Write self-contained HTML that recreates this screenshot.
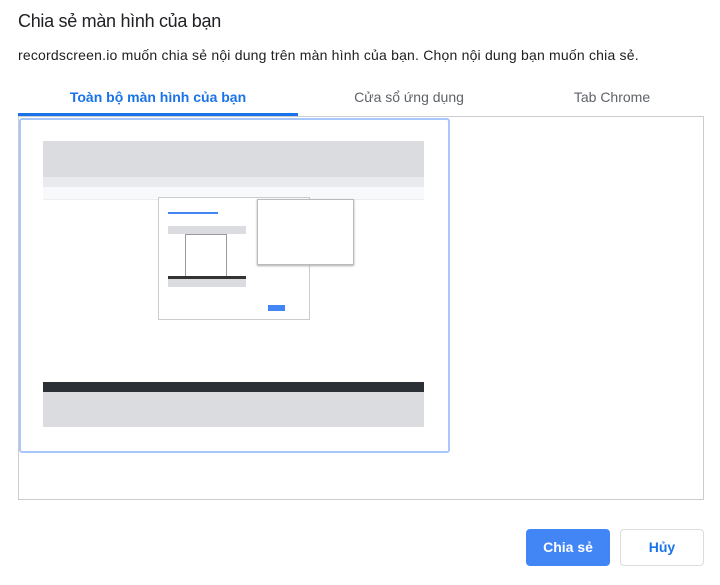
<!DOCTYPE html>
<html><head><meta charset="utf-8"><style>
body{margin:0;width:720px;height:585px;background:#fff;font-family:"Liberation Sans",sans-serif;position:relative;overflow:hidden}
.a{position:absolute}
</style></head><body>
<div class="a" style="left:18px;top:11px;font-size:18px;color:#202124;letter-spacing:-0.3px">Chia sẻ màn hình của bạn</div>
<div class="a" style="left:18px;top:47px;font-size:14px;color:#202124;letter-spacing:0.2px">recordscreen.io muốn chia sẻ nội dung trên màn hình của bạn. Chọn nội dung bạn muốn chia sẻ.</div>
<div class="a" style="left:18px;top:89px;width:280px;text-align:center;font-size:14px;font-weight:bold;color:#1a73e8">Toàn bộ màn hình của bạn</div>
<div class="a" style="left:298px;top:89px;width:222px;text-align:center;font-size:14px;color:#5f6368">Cửa sổ ứng dụng</div>
<div class="a" style="left:520px;top:89px;width:184px;text-align:center;font-size:14px;color:#5f6368">Tab Chrome</div>
<div class="a" style="left:18px;top:116px;width:684px;height:382px;border:1px solid #ccc"></div>
<div class="a" style="left:18px;top:113px;width:280px;height:3px;background:#1a73e8"></div>
<div class="a" style="left:19px;top:118px;width:427px;height:331px;border:2px solid #a8c7fa;border-radius:3px"></div>
<div class="a" style="left:43px;top:141px;width:381px;height:286px;background:#fff">
 <div class="a" style="left:0;top:0;width:381px;height:36px;background:#dadce0"></div>
 <div class="a" style="left:0;top:36px;width:381px;height:10px;background:#e8eaed"></div>
 <div class="a" style="left:0;top:46px;width:381px;height:12px;background:#f8f9fa;border-bottom:1px solid #eee"></div>
 <div class="a" style="left:115px;top:56px;width:150px;height:121px;border:1px solid #ccc;background:#fff"></div>
 <div class="a" style="left:125px;top:71px;width:50px;height:2px;background:#4285f4"></div>
 <div class="a" style="left:125px;top:85px;width:78px;height:8px;background:#dadce0"></div>
 <div class="a" style="left:125px;top:138px;width:78px;height:8px;background:#dadce0"></div>
 <div class="a" style="left:142px;top:93px;width:40px;height:42px;border:1px solid #999;background:#fff"></div>
 <div class="a" style="left:125px;top:135px;width:78px;height:3px;background:#333"></div>
 <div class="a" style="left:225px;top:164px;width:17px;height:6px;background:#4285f4"></div>
 <div class="a" style="left:214px;top:58px;width:95px;height:64px;border:1px solid #bbb;background:#fff;box-shadow:0 1px 2px #aaa"></div>
 <div class="a" style="left:0;top:241px;width:381px;height:10px;background:#2b2f36"></div>
 <div class="a" style="left:0;top:251px;width:381px;height:35px;background:#dadce0"></div>
</div>
<div class="a" style="left:526px;top:529px;width:84px;height:37px;background:#4285f4;border-radius:4px;color:#fff;font-weight:bold;font-size:14px;line-height:37px;text-align:center">Chia sẻ</div>
<div class="a" style="left:620px;top:529px;width:82px;height:35px;border:1px solid #dadce0;border-radius:4px;color:#1a73e8;font-weight:bold;font-size:14px;line-height:35px;text-align:center">Hủy</div>
</body></html>
